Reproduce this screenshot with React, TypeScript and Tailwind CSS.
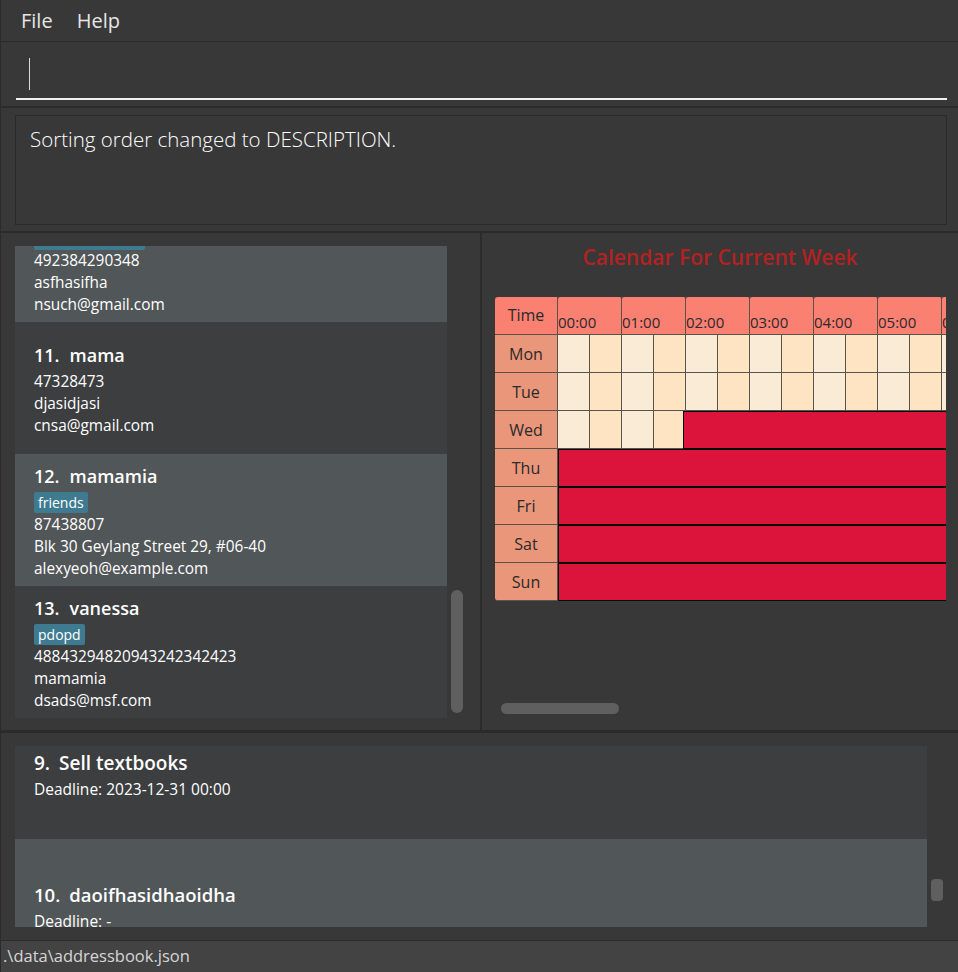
import React from "react";

const hours = ["00:00", "01:00", "02:00", "03:00", "04:00", "05:00", "06:00", "07:00"];

interface Person {
  id: number;
  name: string;
  tag?: string;
  phone: string;
  address: string;
  email: string;
}

const people: Person[] = [
  { id: 11, name: "mama", phone: "47328473", address: "djasidjasi", email: "cnsa@gmail.com" },
  { id: 12, name: "mamamia", tag: "friends", phone: "87438807", address: "Blk 30 Geylang Street 29, #06-40", email: "alexyeoh@example.com" },
  { id: 13, name: "vanessa", tag: "pdopd", phone: "48843294820943242342423", address: "mamamia", email: "dsads@msf.com" },
];

function PersonCard({ p, odd }: { p: Person; odd: boolean }) {
  return (
    <div className={`h-[132px] shrink-0 flex flex-col justify-center pl-[19px] ${odd ? "bg-[#515658]" : "bg-[#3c3e3f]"}`}>
      <div className="h-[31px] flex items-center gap-[10px] text-[18px] font-semibold text-white">
        <span>{p.id}.</span>
        <span>{p.name}</span>
      </div>
      {p.tag && (
        <div className="h-[22px] flex items-center">
          <span className="h-[21px] px-[4px] rounded-[2px] bg-[#3e7b91] text-[14px] leading-[21px] text-white">{p.tag}</span>
        </div>
      )}
      <div className="text-[15.4px] leading-[22px] text-white">
        <div>{p.phone}</div>
        <div>{p.address}</div>
        <div>{p.email}</div>
      </div>
    </div>
  );
}

// the card scrolled half out of view at the top of the list
function PartialCard() {
  return (
    <div className="h-[76px] shrink-0 bg-[#515658] pl-[19px] text-[15.4px] leading-[22px] text-white">
      <div className="w-[111px] h-[4px] rounded-b-[2px] bg-[#3e7b91]" />
      <div>492384290348</div>
      <div>asfhasifha</div>
      <div>nsuch@gmail.com</div>
    </div>
  );
}

function EmptyCells({ count }: { count: number }) {
  return (
    <>
      {Array.from({ length: count }).map((_, i) => (
        <div
          key={i}
          className={`w-[32px] h-full shrink-0 border-r border-b border-[#5a534c] ${i % 2 === 0 ? "bg-[#faebd7]" : "bg-[#ffe4c4]"}`}
        />
      ))}
    </>
  );
}

function DayLabel({ day, last }: { day: string; last?: boolean }) {
  return (
    <div className={`w-[63px] h-full shrink-0 flex items-center justify-center bg-[#e9967a] border-r border-b border-[#5a534c] text-[16px] text-[#2a2a2a] ${last ? "rounded-bl-[3px]" : ""}`}>
      {day}
    </div>
  );
}

function Calendar() {
  return (
    <div className="w-[451px] overflow-hidden">
      <div className="flex h-[38px] w-[700px]">
        <div className="w-[63px] h-full shrink-0 flex items-center justify-center bg-[#fa8072] rounded-tl-[3px] border-r border-b border-[#5a534c] text-[16px] text-[#2a2a2a] pb-[2px]">
          Time
        </div>
        {hours.map((h) => (
          <div key={h} className="w-[64px] h-full shrink-0 flex items-end pb-[2px] bg-[#fa8072] rounded-t-[2px] border-r border-b border-[#5a534c] text-[15px] text-[#2a2a2a] leading-[20px]">
            {h}
          </div>
        ))}
      </div>
      {["Mon", "Tue"].map((d) => (
        <div key={d} className="flex h-[38px] w-[700px]">
          <DayLabel day={d} />
          <EmptyCells count={16} />
        </div>
      ))}
      <div className="flex h-[38px] w-[700px]">
        <DayLabel day="Wed" />
        <EmptyCells count={4} />
        <div className="flex-1 h-full ml-[-3px] bg-[#dc143c] border border-black" />
      </div>
      {["Thu", "Fri", "Sat", "Sun"].map((d) => (
        <div key={d} className="flex h-[38px] w-[700px]">
          <DayLabel day={d} last={d === "Sun"} />
          <div className="flex-1 h-full bg-[#dc143c] border border-black" />
        </div>
      ))}
    </div>
  );
}

export default function App() {
  return (
    <div className="w-[958px] h-[972px] bg-[#383838] flex flex-col overflow-hidden border-l border-[#2b2b2b] font-['Open_Sans',sans-serif]">
      {/* menu */}
      <div className="h-[42px] shrink-0 flex items-center border-b border-[#2b2b2b] text-[20px] text-[#e6e6e6]">
        <span className="ml-[20px]">File</span>
        <span className="ml-[24px]">Help</span>
      </div>

      {/* command box */}
      <div className="h-[66px] shrink-0 border-b-2 border-[#2b2b2b] pl-[15px] pr-[11px] pt-[15px]">
        <div className="h-[43px] border-b-2 border-[#f0f0f0] pl-[13px] pt-[1px]">
          <div className="w-[1px] h-[32px] bg-[#dcdcdc]" />
        </div>
      </div>

      {/* result display */}
      <div className="h-[125px] shrink-0 border-b-2 border-[#2b2b2b] pl-[14px] pr-[11px] pt-[7px]">
        <div className="h-[110px] border border-[#2a2a2a] pl-[14px] pt-[8px] text-[20.5px] font-light text-white">
          Sorting order changed to DESCRIPTION.
        </div>
      </div>

      {/* lists and calendar */}
      <div className="h-[497px] shrink-0 flex">
        <div className="w-[479px] shrink-0 flex pt-[13px] pl-[14px]">
          <div className="w-[432px] h-[472px] overflow-hidden flex flex-col">
            <PartialCard />
            {people.map((p, i) => (
              <PersonCard key={p.id} p={p} odd={i % 2 === 1} />
            ))}
          </div>
          <div className="w-[12px] ml-[4px] pt-[344px]">
            <div className="h-[123px] rounded-full bg-[#5f5f5f]" />
          </div>
        </div>
        <div className="w-[2px] shrink-0 bg-[#2b2b2b]" />
        <div className="flex-1 flex flex-col">
          <div className="h-[50px] flex items-center justify-center text-[21px] font-semibold text-[#b22222]">
            Calendar For Current Week
          </div>
          <div className="pt-[14px] pl-[13px]">
            <Calendar />
          </div>
          <div className="flex-1" />
          <div className="pl-[19px] pb-[16px]">
            <div className="w-[118px] h-[11px] rounded-full bg-[#5f5f5f]" />
          </div>
        </div>
      </div>

      {/* tasks */}
      <div className="h-[210px] shrink-0 border-t-[3px] border-[#2b2b2b] flex pt-[13px] pl-[14px]">
        <div className="w-[912px] h-[181px] overflow-hidden flex flex-col text-white">
          <div className="h-[93px] shrink-0 bg-[#3c3e3f] pl-[19px] pt-[3px]">
            <div className="h-[28px] flex items-center gap-[9px] text-[19px] font-semibold">
              <span>9.</span>
              <span>Sell textbooks</span>
            </div>
            <div className="text-[15.5px] leading-[24px]">Deadline: 2023-12-31 00:00</div>
          </div>
          <div className="h-[88px] shrink-0 bg-[#515658] pl-[19px] pt-[42px] overflow-hidden">
            <div className="h-[28px] flex items-center gap-[9px] text-[18.5px] font-semibold">
              <span>10.</span>
              <span>daoifhasidhaoidha</span>
            </div>
            <div className="text-[15.5px] leading-[24px]">Deadline: -</div>
          </div>
        </div>
        <div className="w-[12px] ml-[4px] pt-[133px]">
          <div className="h-[22px] rounded-[4px] bg-[#5f5f5f]" />
        </div>
      </div>

      {/* status bar */}
      <div className="flex-1 bg-[#434343] border-t border-[#2b2b2b] flex items-center pl-[2px] text-[16.5px] text-[#d6d6d6]">
        .\data\addressbook.json
      </div>
    </div>
  );
}
